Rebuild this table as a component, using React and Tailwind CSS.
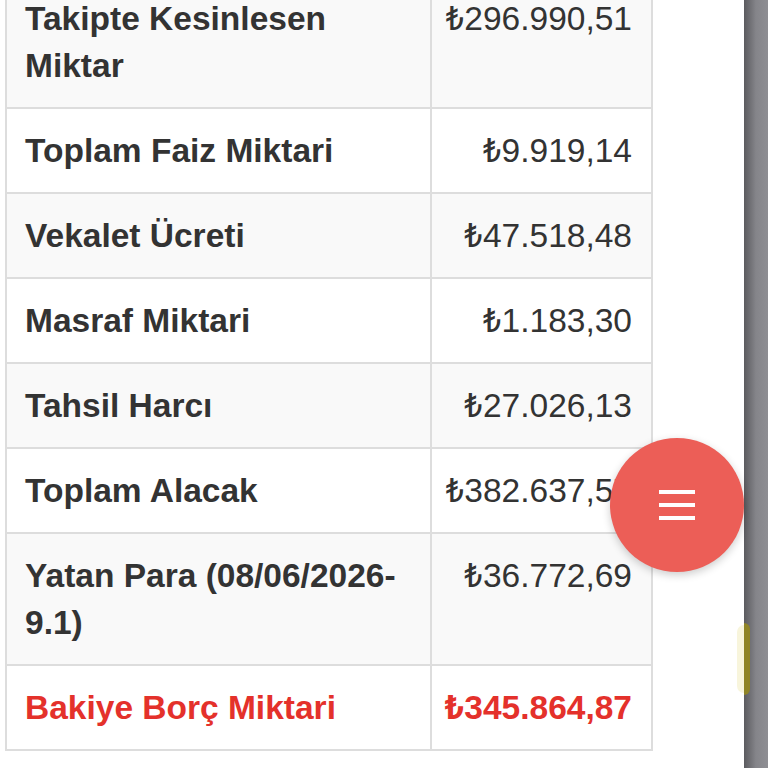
import React from "react";

const rows = [
  { label: "Takipte Kesinlesen Miktar", value: "₺296.990,51" },
  { label: "Toplam Faiz Miktari", value: "₺9.919,14" },
  { label: "Vekalet Ücreti", value: "₺47.518,48" },
  { label: "Masraf Miktari", value: "₺1.183,30" },
  { label: "Tahsil Harcı", value: "₺27.026,13" },
  { label: "Toplam Alacak", value: "₺382.637,57" },
  { label: "Yatan Para (08/06/2026-9.1)", value: "₺36.772,69" },
  { label: "Bakiye Borç Miktari", value: "₺345.864,87", total: true },
];

const App = () => {
  return (
    <div className="relative w-[768px] h-[768px] overflow-hidden flex bg-white font-['Liberation_Sans','Roboto','DejaVu_Sans',sans-serif]">
      {/* Page */}
      <div className="w-[744px] h-full bg-white">
        <div className="mt-[-25px] pl-[5px]">
          <table className="table-fixed w-[648px] border-collapse text-[33.5px] leading-[47px] text-[#333]">
            <colgroup>
              <col className="w-[425px]" />
              <col />
            </colgroup>
            <tbody>
              {rows.map((row, i) => (
                <tr key={row.label} className={i % 2 === 0 ? "bg-[#f9f9f9]" : "bg-white"}>
                  <td
                    className={
                      "border-2 border-[#dddddd] pl-[18px] pr-[18px] py-[18px] align-top font-bold " +
                      (row.total ? "text-[#e4312b]" : "")
                    }
                  >
                    {row.label}
                  </td>
                  <td
                    className={
                      "border-2 border-[#dddddd] pl-[10px] pr-[19px] py-[18px] align-top text-right whitespace-nowrap " +
                      (row.total ? "text-[#e4312b] font-bold" : "")
                    }
                  >
                    {row.value}
                  </td>
                </tr>
              ))}
            </tbody>
          </table>
        </div>
      </div>

      {/* Right edge of the page behind */}
      <div className="relative w-[24px] h-full bg-gradient-to-r from-[#5b5b5f] via-[#85858a] to-[#8e8e93]">
        <div className="absolute left-0 top-[623px] w-[6px] h-[72px] rounded-r-full bg-[#8f8426]"></div>
      </div>
      <div className="absolute left-[737px] top-[625px] w-[7px] h-[68px] rounded-l-full bg-[#f3eec4] opacity-60"></div>

      {/* Floating menu button */}
      <button className="absolute left-[610px] top-[438px] w-[134px] h-[134px] rounded-full bg-[#ec5e57] shadow-[0_3px_8px_rgba(0,0,0,0.2)] flex flex-col items-center justify-center gap-[9px]">
        <span className="block w-[36px] h-[4px] bg-white"></span>
        <span className="block w-[36px] h-[4px] bg-white"></span>
        <span className="block w-[36px] h-[4px] bg-white"></span>
      </button>
    </div>
  );
};

export default App;
